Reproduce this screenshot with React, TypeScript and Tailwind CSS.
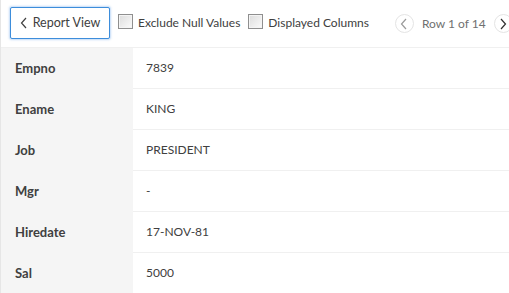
import React from "react";

const rows: [string, string][] = [
  ["Empno", "7839"],
  ["Ename", "KING"],
  ["Job", "PRESIDENT"],
  ["Mgr", "-"],
  ["Hiredate", "17-NOV-81"],
  ["Sal", "5000"],
];

const Checkbox = ({ label }: { label: string }) => (
  <label className="flex items-center gap-[5px] whitespace-nowrap">
    <span className="w-[15px] h-[15px] shrink-0 border border-[#8f8f8f] bg-gradient-to-br from-[#dcdcdc] to-[#fbfbfb] shadow-[inset_0_0_0_1px_#f4f4f4] mt-[-3px]" />
    <span>{label}</span>
  </label>
);

const Chevron = ({ dir }: { dir: "left" | "right" }) => (
  <svg width="8" height="12" viewBox="0 0 8 12" fill="none">
    <path
      d={dir === "left" ? "M6 1L1.5 6L6 11" : "M2 1L6.5 6L2 11"}
      stroke="currentColor"
      strokeWidth="1.2"
    />
  </svg>
);

export default function App() {
  return (
    <div
      className="w-[509px] h-[293px] overflow-hidden bg-white border-l border-[#e6e6e6] text-[12px] text-[#404040]"
      style={{ fontFamily: "Lato, 'Noto Sans', sans-serif" }}
    >
      {/* Toolbar */}
      <div className="h-[48px] flex items-center pl-[9px] border-b border-[#f0f0f0] whitespace-nowrap">
        <button className="h-[32px] w-[100px] shrink-0 flex items-center justify-center gap-[5px] rounded-[2px] border border-[#3d8ddb] shadow-[0_0_2px_1px_rgba(80,150,230,0.35)] bg-white text-[#404040] text-[12.5px] mt-[-1px]">
          <Chevron dir="left" />
          <span>Report View</span>
        </button>
        <div className="ml-[8px] mt-[-2px]">
          <Checkbox label="Exclude Null Values" />
        </div>
        <div className="ml-[8px] mt-[-2px]">
          <Checkbox label="Displayed Columns" />
        </div>
        <div className="ml-[26px] flex items-center gap-[8px] text-[#707070] shrink-0">
          <span className="w-[19px] h-[19px] shrink-0 rounded-full border border-[#e4e4e4] flex items-center justify-center text-[#9a9a9a]">
            <Chevron dir="left" />
          </span>
          <span className="text-[12px]">Row 1 of 14</span>
          <span className="w-[19px] h-[19px] shrink-0 rounded-full border border-[#e4e4e4] flex items-center justify-center text-[#303030]">
            <Chevron dir="right" />
          </span>
        </div>
      </div>

      {/* Record */}
      <div className="flex flex-col">
        {rows.map(([k, v]) => (
          <div key={k} className="flex h-[41px]">
            <div className="w-[132px] bg-[#f5f5f5] pl-[14px] flex items-center font-bold text-[13px]">
              {k}
            </div>
            <div className="flex-1 pl-[13px] flex items-center border-b border-[#f0f0f0]">
              {v}
            </div>
          </div>
        ))}
      </div>
    </div>
  );
}
